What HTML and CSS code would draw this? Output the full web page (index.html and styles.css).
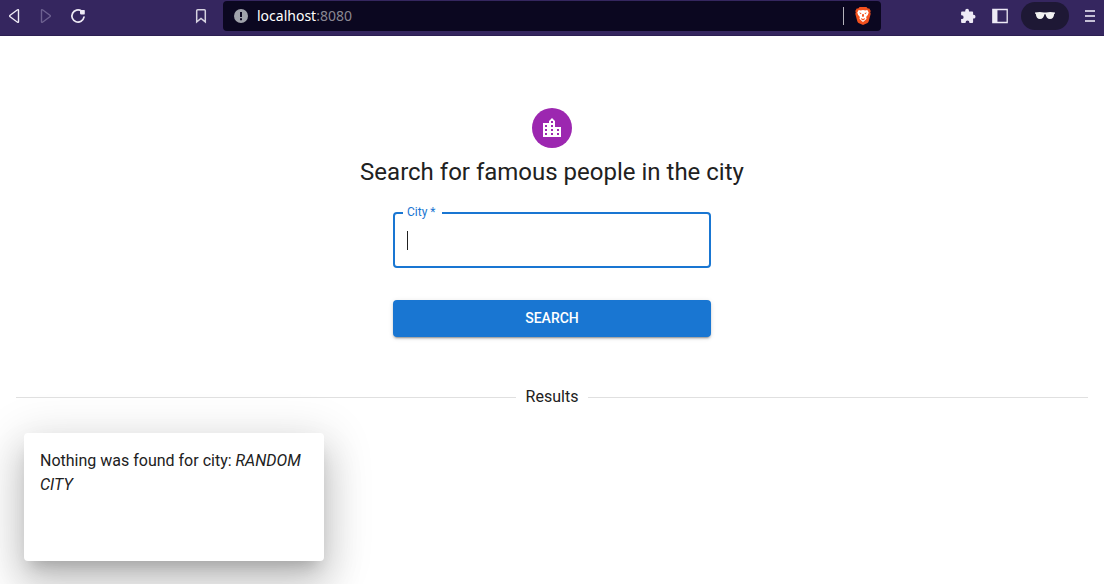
FILE: index.html
```html
<!DOCTYPE html>
<html lang="en">
<head>
<meta charset="utf-8">
<title>Search for famous people in the city</title>
<link rel="stylesheet" href="styles.css">
</head>
<body>
<header class="toolbar">
  <button class="tool" aria-label="Back"><svg width="16" height="16" viewBox="0 0 16 16"><path d="M12.500 2.200v11.600q0 1-1 .4L4.100 8.700q-.9-.7 0-1.400l7.400-5.500q1-.6 1 .4z" fill="none" stroke="#eeeaf5" stroke-width="1.400"/></svg></button>
  <button class="tool" aria-label="Forward" disabled><svg width="16" height="16" viewBox="0 0 16 16"><path d="M3.500 2.200v11.600q0 1 1 .4l7.400-5.500q.9-.7 0-1.400L4.500 1.800q-1-.6-1 .4z" fill="none" stroke="#6d6190" stroke-width="1.400"/></svg></button>
  <button class="tool" aria-label="Reload"><svg width="16" height="16" viewBox="0 0 16 16"><path d="M14 9.200A6.100 6.100 0 1 1 11.500 3" fill="none" stroke="#eeeaf5" stroke-width="1.700" stroke-linecap="round"/><path d="M10 2.600q0-.6.600-.6h3.600q.6 0 .6.600v2.800q0 1.200-1.200 1.200h-2.200q-1.400 0-1.400-1.400z" fill="#eeeaf5"/></svg></button>
  <button class="tool bookmark" aria-label="Bookmark"><svg width="16" height="16" viewBox="0 0 16 16"><path d="M3.700 2.700q0-1 1-1h6.600q1 0 1 1v11.200L8 10.500l-4.300 3.400z" fill="none" stroke="#d6d2e0" stroke-width="1.500"/></svg></button>
  <div class="address">
    <svg class="info" width="14" height="14" viewBox="0 0 14 14"><circle cx="7" cy="7" r="7" fill="#a0a3ab"/><path d="M6 3h2v5H6zM6 9.300h2v2H6z" fill="#0b0720"/></svg>
    <span class="url"><span class="host">localhost</span>:8080</span>
    <button class="shield" aria-label="Shields"><svg width="16" height="18" viewBox="0 0 16 18"><path d="M4.600 0h6.800l1.400 1.600 1.500-.1L15.700 4l-.5 1.400.5 1.300-2 7.600q-.3 1-1.200 1.600L8 18l-4.500-2.100q-.9-.6-1.200-1.600L.3 6.700l.5-1.300L.3 4l1.400-2.500 1.500.1z" fill="#f4511e"/><path d="M3.700 3l2 .4L8 2.900l2.300.5 2-.4 1.400 2.600-.9 2.300-1.700 2.200.5 1.300-.7 1.200-2.900 2.500-2.900-2.500-.7-1.200.5-1.300-1.700-2.200-.9-2.300z" fill="#fff"/><path d="M4 5.600l2.500.5-.7 1.200zM12 5.600l-2.500.5.7 1.200zM7.300 7h1.400l.4 2.200-1.100.9-1.100-.9zM5.800 11L8 12l2.200-1-.6 1.500L8 13.500l-1.600-1z" fill="#f4511e"/></svg></button>
  </div>
  <button class="tool" aria-label="Extensions"><svg width="16" height="16" viewBox="0 0 16 16"><path d="M2 3.500h3.200V2.700a1.900 1.900 0 0 1 3.800 0v.8h3.200q.9 0 .9.900v2.400h.5a1.900 1.900 0 0 1 0 3.800h-.5v3.500q0 .9-.9.900H9.400v-.6a1.900 1.900 0 0 0-3.800 0v.6H2q-.9 0-.9-.9v-3h.6a1.900 1.900 0 0 0 0-3.800h-.6V4.400q0-.9.900-.9z" fill="#eeeaf5"/></svg></button>
  <button class="tool" aria-label="Sidebar"><svg width="16" height="16" viewBox="0 0 16 16"><path d="M.8 1.500h14.400v13H.8zM4.800 1.500v13" fill="none" stroke="#eeeaf5" stroke-width="1.300"/><path d="M1 2h4v12H1z" fill="#eeeaf5"/></svg></button>
  <button class="private" aria-label="Private window"><svg width="22" height="10" viewBox="0 0 22 10"><path d="M1 1.500q5-.8 9 0h2q4-.8 9 0v1.300h-.8q-.4 5.200-4.200 5.200-3.700 0-4.400-4.800h-1.200Q9.700 8 6 8 2.200 8 1.800 2.800H1z" fill="#f2f2f2"/></svg></button>
  <button class="tool" aria-label="Menu"><svg width="10" height="14" viewBox="0 0 10 14"><path d="M0 2h10M0 7h10M0 12h10" stroke="#c6c0d6" stroke-width="2"/></svg></button>
</header>
<main>
  <form class="search">
    <span class="avatar"><svg width="24" height="24" viewBox="0 0 24 24"><path d="M15 11V5l-3-3-3 3v2H3v14h18V11h-6zm-8 8H5v-2h2v2zm0-4H5v-2h2v2zm0-4H5V9h2v2zm6 8h-2v-2h2v2zm0-4h-2v-2h2v2zm0-4h-2V9h2v2zm0-4h-2V5h2v2zm6 12h-2v-2h2v2zm0-4h-2v-2h2v2z" fill="#fff"/></svg></span>
    <h1>Search for famous people in the city</h1>
    <div class="field">
      <input id="city" type="text" required>
      <label for="city">City *</label>
    </div>
    <button class="submit" type="button">SEARCH</button>
  </form>
  <h2 class="divider">Results</h2>
  <section class="card"><p>Nothing was found for city: <em>RANDOM CITY</em></p></section>
</main>
</body>
</html>
```
FILE: styles.css
```css
* { box-sizing: border-box; }
body {
  min-height: 100vh;
  margin: 0;
  background: #fff;
  color: #212121;
  font: 16px/24px Roboto, sans-serif;
}
button { margin: 0; padding: 0; border: 0; background: none; font: inherit; }
svg { display: block; }

.toolbar {
  display: flex;
  align-items: center;
  gap: 4px;
  padding: 1px 0 4px;
  background: #35265f;
  border-bottom: 1px solid #2c1f52;
}
.tool { display: grid; place-items: center; width: 28px; height: 30px; flex: none; }
.bookmark { margin-left: 91px; }
.address {
  display: flex;
  flex: 1;
  align-items: center;
  height: 30px;
  margin: 0 69px 0 4px;
  padding: 0 10px 0 11px;
  border-radius: 4px;
  background: #0b0720;
}
.url {
  flex: 1;
  margin-left: 9px;
  color: #8a8792;
  font: 14px/20px "Noto Sans", sans-serif;
}
.host { color: #fff; }
.shield { padding-left: 11px; border-left: 1px solid #b5b3bc; }
.private {
  display: grid;
  place-items: center;
  width: 48px;
  height: 28px;
  margin: 0 3px;
  border-radius: 14px;
  background: #1e1835;
}

main { padding: 72px 16px 16px; }
.search {
  display: flex;
  flex-direction: column;
  align-items: center;
}
.avatar {
  display: grid;
  place-items: center;
  width: 40px;
  height: 40px;
  margin-bottom: 8px;
  border-radius: 50%;
  background: #9c27b0;
}
h1 { margin: 0 0 24px; font-size: 24px; line-height: 32px; font-weight: 400; text-align: center; }
.field { position: relative; width: 100%; max-width: 318px; }
.field input {
  display: block;
  width: 100%;
  height: 56px;
  padding: 0 12px;
  border: 2px solid #1976d2;
  border-radius: 4px;
  outline: 0;
  background: linear-gradient(#212121, #212121) 12px center / 1px 19px no-repeat;
  font: inherit;
}
.field label {
  position: absolute;
  top: -8px;
  left: 10px;
  padding: 0 7px 0 4px;
  background: #fff;
  color: #1976d2;
  font-size: 12px;
  line-height: 16px;
}
.submit {
  width: 100%;
  max-width: 318px;
  height: 37px;
  margin: 32px 0 48px;
  padding-bottom: 2px;
  border-radius: 4px;
  background: #1976d2;
  box-shadow: 0 3px 1px -2px rgba(0,0,0,.2), 0 2px 2px rgba(0,0,0,.14), 0 1px 5px rgba(0,0,0,.12);
  color: #fff;
  font-size: 14px;
  font-weight: 500;
}
.divider {
  display: flex;
  align-items: center;
  gap: 10px;
  margin: 0;
  font-size: 16px;
  font-weight: 400;
}
.divider::before, .divider::after { content: ""; flex: 1; border-top: 1px solid #e0e0e0; }
.card {
  max-width: 300px;
  min-height: 128px;
  margin: 24px 8px 0;
  padding: 16px;
  border-radius: 4px;
  background: #fff;
  box-shadow: 0 11px 15px -7px rgba(0,0,0,.2), 0 24px 38px 3px rgba(0,0,0,.14), 0 9px 46px 8px rgba(0,0,0,.12);
}
.card p { margin: 0; }
```
